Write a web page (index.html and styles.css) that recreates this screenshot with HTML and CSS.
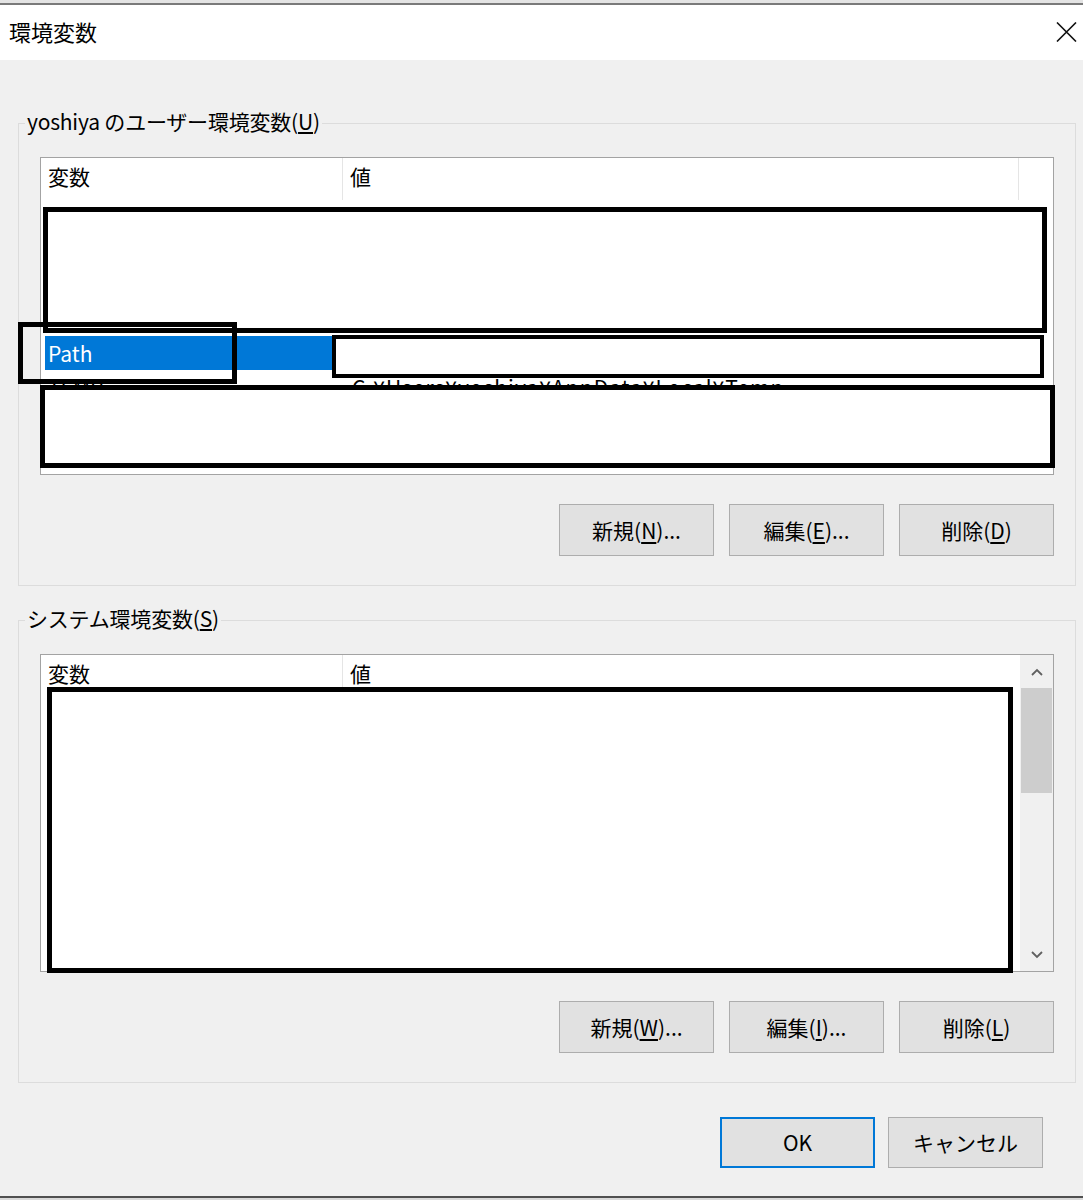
FILE: index.html
```html
<!DOCTYPE html>
<html lang="ja">
<head>
<meta charset="utf-8">
<title>環境変数</title>
<link rel="stylesheet" href="styles.css">
</head>
<body>
<div class="window">
  <div class="top-edge"></div>
  <header class="titlebar">
    <span class="title">環境変数</span>
    <span class="close" aria-label="閉じる">
      <svg width="21" height="20" viewBox="0 0 21 20"><path d="M1 0.5 L20 19.5 M20 0.5 L1 19.5" stroke="#111" stroke-width="1.6" fill="none"/></svg>
    </span>
  </header>
  <main class="body">
    <section class="group">
      <div class="group-label">yoshiya のユーザー環境変数(<u>U</u>)</div>
      <div class="list">
        <div class="list-main">
          <div class="list-head">
            <div class="hcell c-name">変数</div>
            <div class="hcell c-value">値</div>
            <div class="hcell c-rest"></div>
          </div>
          <div class="rows">
            <div class="row"></div>
            <div class="row"></div>
            <div class="row"></div>
            <div class="row"></div>
            <div class="row selected"><div class="cell c-name"><span class="sel">Path</span></div><div class="cell c-value"></div></div>
            <div class="row"><div class="cell c-name"><span class="txt">TEMP</span></div><div class="cell c-value">C:¥Users¥yoshiya¥AppData¥Local¥Temp</div></div>
            <div class="row"><div class="cell c-name"><span class="txt">TMP</span></div><div class="cell c-value">C:¥Users¥yoshiya¥AppData¥Local¥Temp</div></div>
          </div>
        </div>
      </div>
      <div class="btn-row">
        <button class="btn">新規(<u>N</u>)...</button>
        <button class="btn">編集(<u>E</u>)...</button>
        <button class="btn">削除(<u>D</u>)</button>
      </div>
      <div class="redact r-a"></div>
      <div class="redact r-b"></div>
      <div class="redact r-c"></div>
      <div class="redact r-d"></div>
    </section>

    <section class="group group-sys">
      <div class="group-label">システム環境変数(<u>S</u>)</div>
      <div class="list">
        <div class="list-main">
          <div class="list-head">
            <div class="hcell c-name">変数</div>
            <div class="hcell c-value last">値</div>
          </div>
          <div class="rows"></div>
        </div>
        <div class="scrollbar">
          <div class="sb-arrow">
            <svg width="12" height="8" viewBox="0 0 12 8"><path d="M1 7 L6 2 L11 7" stroke="#606060" stroke-width="1.8" fill="none"/></svg>
          </div>
          <div class="sb-track"><div class="sb-thumb"></div></div>
          <div class="sb-arrow">
            <svg width="12" height="8" viewBox="0 0 12 8"><path d="M1 1 L6 6 L11 1" stroke="#606060" stroke-width="1.8" fill="none"/></svg>
          </div>
        </div>
      </div>
      <div class="btn-row">
        <button class="btn">新規(<u>W</u>)...</button>
        <button class="btn">編集(<u>I</u>)...</button>
        <button class="btn">削除(<u>L</u>)</button>
      </div>
      <div class="redact r-e"></div>
    </section>

    <div class="dialog-buttons">
      <button class="btn default">OK</button>
      <button class="btn">キャンセル</button>
    </div>
  </main>
  <div class="bottom-edge"></div>
</div>
</body>
</html>
```

FILE: styles.css
```css
* { box-sizing: border-box; }

html, body {
  margin: 0;
  padding: 0;
}

body {
  width: 1083px;
  height: 1200px;
  overflow: hidden;
  background: #f0f0f0;
  font-family: "Noto Sans CJK JP", "Noto Sans", sans-serif;
  color: #000;
}

.window {
  display: flex;
  flex-direction: column;
  height: 1200px;
}

.top-edge {
  height: 5px;
  background: #e4e4e4;
  border-bottom: 2px solid #7a7a7a;
}

.titlebar {
  height: 55px;
  background: #fff;
  display: flex;
  align-items: center;
  justify-content: space-between;
  padding: 0 6px 4px 9px;
}

.title {
  font-size: 22px;
  line-height: 30px;
}

.close {
  display: flex;
  margin-top: 3px;
}

.body {
  flex: 1;
  padding-top: 63px;
  display: flex;
  flex-direction: column;
}

.group {
  position: relative;
  margin-left: 18px;
  width: 1058px;
  height: 463px;
  border: 1px solid #dcdcdc;
  padding: 33px 21px 0 21px;
  display: flex;
  flex-direction: column;
}

.group-sys {
  margin-top: 34px;
}

.group-label {
  position: absolute;
  left: 6px;
  top: -19px;
  padding: 0 2px;
  background: #f0f0f0;
  font-size: 21px;
  line-height: 32px;
  letter-spacing: -0.2px;
}

.list {
  height: 318px;
  background: #fff;
  border: 1px solid #a3a3a3;
  display: flex;
  overflow: hidden;
}

.list-main {
  flex: 1;
  display: flex;
  flex-direction: column;
}

.list-head {
  height: 42px;
  display: flex;
  flex-shrink: 0;
}

.hcell {
  font-size: 21px;
  line-height: 37px;
  padding-left: 7px;
  border-right: 1px solid #e5e5e5;
  white-space: nowrap;
}

.hcell.c-name { width: 302px; }
.hcell.c-value { width: 676px; }
.hcell.c-value.last { border-right: 0; flex: 1; }
.hcell.c-rest { flex: 1; border-right: 0; }

.rows {
  display: flex;
  flex-direction: column;
}

.row {
  height: 34px;
  display: flex;
  font-size: 21px;
  line-height: 34px;
  white-space: nowrap;
}

.cell.c-name {
  width: 302px;
  padding-left: 4px;
}

.cell.c-value {
  padding-left: 9px;
  letter-spacing: 1px;
}

.sel {
  display: block;
  width: 288px;
  background: #0078d7;
  color: #fff;
  padding-left: 3px;
}

.txt {
  padding-left: 3px;
}

.scrollbar {
  width: 33px;
  background: #f0f0f0;
  display: flex;
  flex-direction: column;
}

.sb-arrow {
  height: 33px;
  display: flex;
  align-items: center;
  justify-content: center;
}

.sb-track {
  flex: 1;
  padding: 0 1px;
}

.sb-thumb {
  height: 105px;
  background: #cdcdcd;
}

.btn-row {
  display: flex;
  justify-content: flex-end;
  gap: 15px;
  margin-top: 29px;
}

.btn {
  width: 155px;
  height: 52px;
  padding: 0;
  background: #e1e1e1;
  border: 1px solid #adadad;
  font-family: "Noto Sans CJK JP", "Noto Sans", sans-serif;
  font-size: 21px;
  color: #000;
  line-height: 1;
}

.btn u {
  text-underline-offset: 3px;
}

.dialog-buttons {
  display: flex;
  justify-content: flex-end;
  gap: 13px;
  margin-top: 34px;
  padding-right: 40px;
}

.dialog-buttons .btn {
  height: 51px;
}

.btn.default {
  border: 2px solid #0078d7;
}

.redact {
  position: absolute;
  border: 5px solid #000;
}

.r-a { left: 24px; top: 83px; width: 1004px; height: 126px; background: #fff; }
.r-b { left: -1px; top: 198px; width: 219px; height: 62px; border-width: 5px; }
.r-c { left: 313px; top: 211px; width: 712px; height: 43px; border-width: 4px; background: #fff; }
.r-d { left: 21px; top: 261px; width: 1015px; height: 83px; background: #fff; }
.r-e { left: 28px; top: 66px; width: 966px; height: 286px; background: #fff; }

.bottom-edge {
  height: 4px;
  background: #dadada;
  border-top: 2px solid #505050;
}
```
